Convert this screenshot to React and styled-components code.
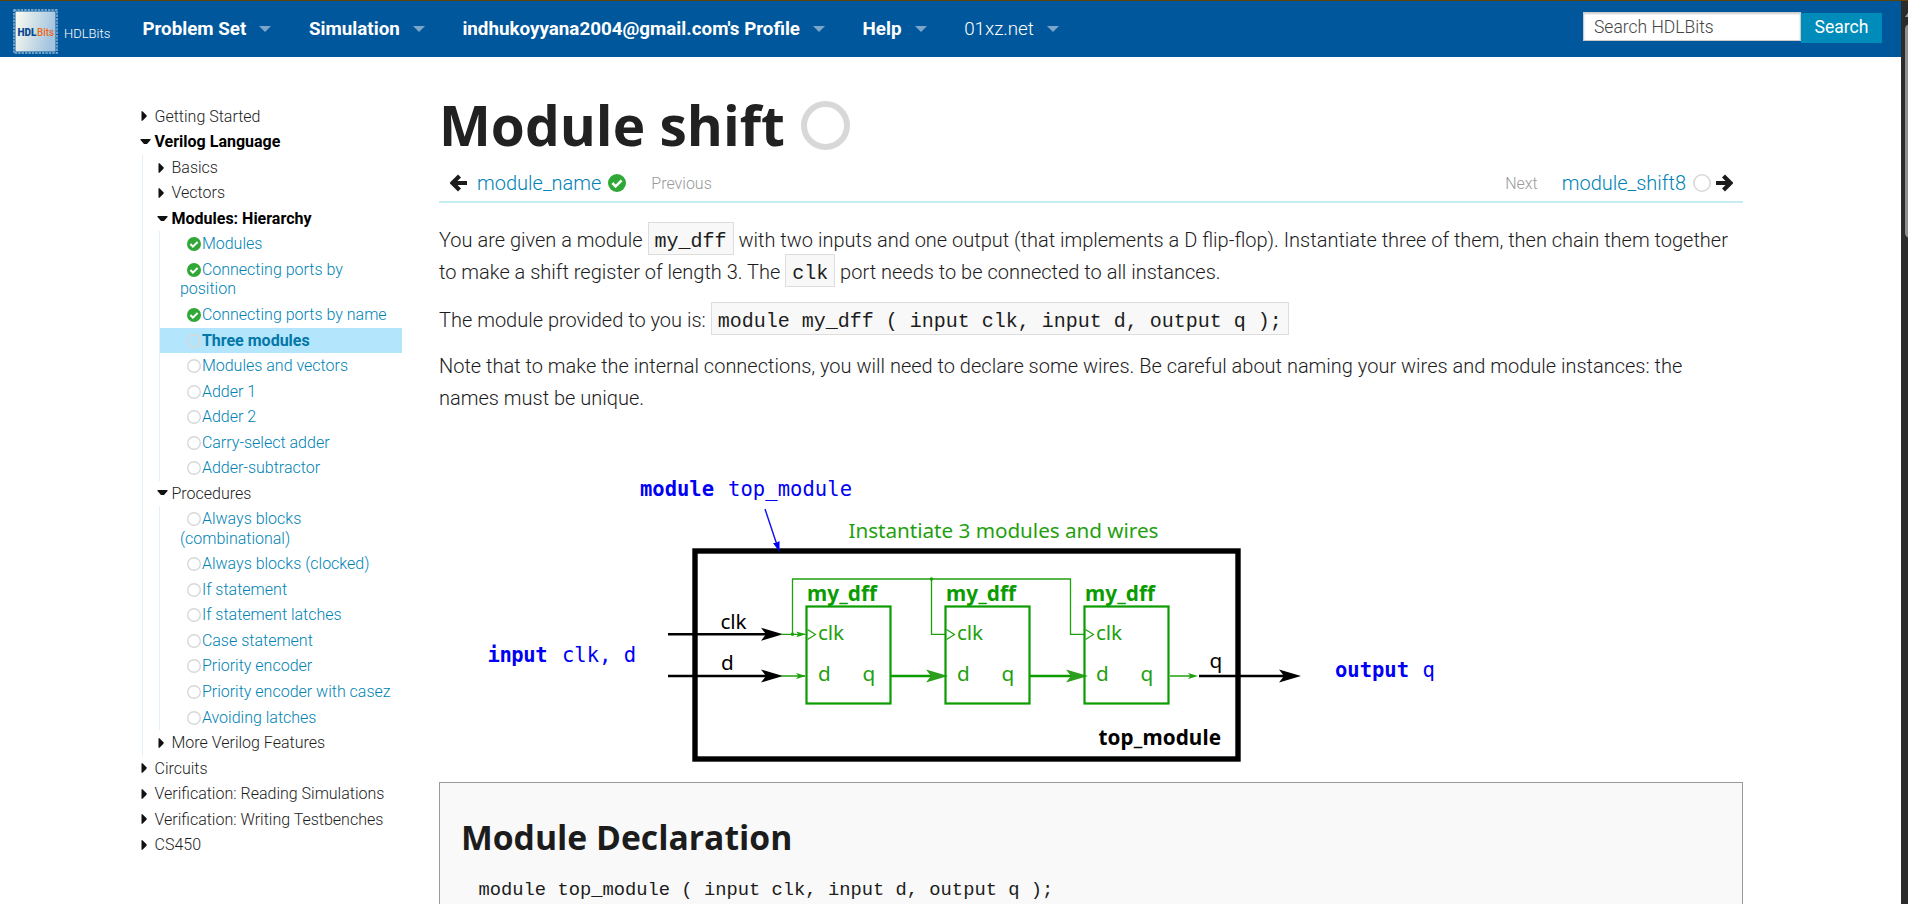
import React from "react";
import styled, { createGlobalStyle, css } from "styled-components";

const Global = createGlobalStyle`
  * { box-sizing: border-box; }
  body { margin: 0; background: #fff; overflow: hidden; font-family: Roboto, "Liberation Sans", sans-serif; font-weight: 300; color: #1c1c1c; }
  a { text-decoration: none; color: #0083b4; }
`;

const Screen = styled.div`
  display: flex;
  height: 904px;
  overflow: hidden;
  border-top: 1px solid #5f4208;
`;
const Page = styled.div`
  flex: 1;
  min-width: 0;
  display: flex;
  flex-direction: column;
`;
const ScrollTrack = styled.div`
  width: 7px;
  background: #2b2b2b;
  padding: 8px 0 0 4px;
  overflow: hidden;
  svg { display: block; margin-bottom: 7px; }
`;
const ScrollThumb = styled.div`
  width: 10px;
  height: 214px;
  border-radius: 5px;
  background: #8f8f8f;
`;

const NavBar = styled.nav`
  height: 56px;
  flex: none;
  background: #01579b;
  display: flex;
  align-items: flex-start;
  color: #fff;
  padding: 0 19px 0 13px;
`;
const Brand = styled.a`
  display: flex;
  align-items: flex-start;
  padding-top: 8px;
  width: 129.4px;
  color: #fff;
  font-size: 13px;
  svg { flex: none; }
  span { margin: 17px 0 0 6px; line-height: 16px; }
`;
const NavItem = styled.a`
  display: flex;
  align-items: center;
  height: 55px;
  color: #fff;
  font-size: 18.8px;
  font-weight: ${(p) => (p.$light ? 300 : 700)};
  margin-right: 37.6px;
  svg { margin-left: 13px; }
`;
const SearchForm = styled.div`
  margin-left: auto;
  padding-top: 11px;
  display: flex;
`;
const SearchInput = styled.input`
  width: 218px;
  height: 29px;
  border: 1px solid #ccc;
  box-shadow: inset 0 1px 2px rgba(0, 0, 0, 0.2);
  padding: 0 10px;
  font: 300 17.5px Roboto, sans-serif;
  background: #fff;
  &::placeholder { color: #444; opacity: 1; }
`;
const SearchButton = styled.button`
  margin-top: 1px;
  width: 81px;
  height: 30px;
  border: 0;
  padding: 0 0 3px;
  background: #008cba;
  color: #fff;
  font: 400 17.6px Roboto, sans-serif;
`;

const Body = styled.div`
  display: flex;
  flex: 1;
  min-height: 0;
  padding-left: 140px;
`;
const Sidebar = styled.aside`
  width: 262px;
  padding-top: 46.7px;
  margin-right: 37px;
  flex: none;
  font-size: 16px;
  line-height: 19.6px;
`;
const Heading = styled.div`
  display: flex;
  align-items: center;
  padding: 2.97px 0;
  color: ${(p) => (p.$bold ? "#000" : "#1c1c1c")};
  font-weight: ${(p) => (p.$bold ? 700 : 300)};
`;
const ArrowSlot = styled.span`
  width: 14.5px;
  display: flex;
`;
const Group = styled.div`
  margin-left: 2px;
  padding-left: ${(p) => (p.$leaf ? 0 : 14)}px;
  border-left: 1px solid #e1f1fb;
`;
const Leaf = styled.div`
  padding: 2.97px 0 2.97px 19.9px;
  ${(p) => p.$active && css`background: #b3e5fc; a { color: #0277a8; font-weight: 700; }`}
  svg { margin: 0 1px -2px 7px; }
`;

const Content = styled.main`
  width: 1304px;
  flex: none;
  padding-top: 30px;
`;
const Title = styled.h1`
  margin: 0;
  display: flex;
  align-items: center;
  font: 700 55px/76px "Open Sans", sans-serif;
  color: #212121;
  svg { margin: 1px 0 0 16px; }
`;
const Pager = styled.div`
  display: flex;
  align-items: center;
  height: 40px;
  padding: 1px 10px 0 11px;
  border-bottom: 2px solid #c5ebf3;
  font-size: 20px;
  svg { flex: none; }
`;
const PagerLink = styled.a`
  margin: 0 7px 0 ${(p) => p.$before}px;
`;
const Hint = styled.span`
  font-size: 16px;
  color: #999;
  padding-top: 2px;
  margin-left: ${(p) => (p.$end ? "auto" : "25px")};
`;
const ArrowGap = styled.span`
  width: 5px;
`;
const Prose = styled.div`
  font-size: 20px;
  line-height: 32px;
`;
const Para = styled.p`
  margin: ${(p) => p.$top}px 0 0;
`;
const Code = styled.code`
  font: 400 20px "Liberation Mono", monospace;
  color: #1c1c1c;
  background: #f8f8f8;
  border: 1px solid #ddd;
  padding: 7px 6px 1px;
`;
const Figure = styled.div`
  margin-top: 46px;
  height: 322px;
  padding-left: 32px;
  svg { display: block; }
`;
const Declaration = styled.section`
  border: 1px solid #999;
  background: #f9f9f9;
  height: 300px;
  padding: 27px 21px;
  h2 { margin: 0; font: 700 33.7px/54px "Open Sans", sans-serif; color: #1c1c1c; }
  pre { margin: 12px 0 0 17.5px; font: 400 18.8px/28px "Liberation Mono", monospace; color: #1c1c1c; }
`;

const NavCaret = () => (
  <svg width="12" height="8" viewBox="0 0 12 8"><path d="M0 1h12L6 7z" fill="#7aa6cb" /></svg>
);
const Ring = ({ size, w }) => (
  <svg width={size} height={size} viewBox={`0 0 ${size} ${size}`}>
    <circle cx={size / 2} cy={size / 2} r={(size - w) / 2} fill="none" stroke="#d8d8d8" strokeWidth={w} />
  </svg>
);
const Done = ({ size }) => (
  <svg width={size} height={size} viewBox="0 0 14 14">
    <circle cx="7" cy="7" r="7" fill="#2fa836" />
    <path d="M3.4 7l2.5 2.6L10.6 5" fill="none" stroke="#fff" strokeWidth="2" />
  </svg>
);
const Arrow = ({ flip }) => (
  <svg width="17" height="18" viewBox="0 0 17 18">
    <path
      d={flip ? "M7.500 2l7 7-7 7M14 9H0" : "M9.500 2l-7 7 7 7M3 9h14"}
      fill="none" stroke="#1c1c1c" strokeWidth="4.200"
    />
  </svg>
);
const TreeArrow = ({ open }) => (
  <ArrowSlot>
    {open ? (
      <svg width="11" height="8" viewBox="0 0 11 8"><path d="M0.5 1h10v1L7 6H4L0.500 2z" fill="#111" /></svg>
    ) : (
      <svg width="11" height="10" viewBox="0 0 11 10"><path d="M1.500 0.300h1L6.500 4.300v1.400L2.500 9.700h-1z" fill="#111" /></svg>
    )}
  </ArrowSlot>
);
const Node = ({ label, open, bold, children, leaf }) => (
  <>
    <Heading $bold={bold}><TreeArrow open={open} />{label}</Heading>
    {children && <Group $leaf={leaf}>{children}</Group>}
  </>
);
const Item = ({ done, active, children }) => (
  <Leaf $active={active}>{done ? <Done size={14} /> : <Ring size={14} w={1.4} />}<a>{children}</a></Leaf>
);

const Logo = () => (
  <svg width="45" height="45" viewBox="0 0 45 45">
    <defs>
      <linearGradient id="chip" x1="0" y1="0" x2="1" y2="0.25">
        <stop offset="0" stopColor="#fdfdf0" /><stop offset="1" stopColor="#a4c4e0" />
      </linearGradient>
    </defs>
    <rect x="1" y="1" width="43" height="43" fill="none" stroke="#8fb7d8" strokeWidth="1.500" strokeDasharray="2.400 1" />
    <rect x="2.500" y="2.500" width="40" height="40" fill="url(#chip)" />
    <text x="4.500" y="26.500" fontFamily="Roboto" fontSize="10.500" fontWeight="900" fill="#0b4a8f" textLength="19" lengthAdjust="spacingAndGlyphs">HDL</text>
    <text x="24" y="26.500" fontFamily="Roboto" fontSize="10.500" fontWeight="500" fill="#f0680f" textLength="17" lengthAdjust="spacingAndGlyphs">Bits</text>
  </svg>
);

const G = "#1fa00f";
const Dff = ({ x }) => (
  <g>
    <rect x={x} y="146.500" width="84" height="97" fill="none" stroke="#0a9c00" strokeWidth="2.200" />
    <path d={`M${x + 1} 169.500l8 5-8 5`} fill="none" stroke={G} strokeWidth="1.200" />
    <text x={x + 0.5} y="141" fontWeight="700" fill="#0a9c00" textLength="70">my_dff</text>
    <text x={x + 11.5} y="180" fill={G} textLength="26">clk</text>
    <text x={x + 11.5} y="221" fill={G}>d</text>
    <text x={x + 56} y="221" fill={G}>q</text>
  </g>
);
const Head = ({ x, y, fill, s = 1 }) => (
  <path d={`M${x} ${y}l${-22 * s} ${-6.5 * s}l${5 * s} ${6.5 * s}l${-5 * s} ${6.5 * s}z`} fill={fill} />
);
const Diagram = () => (
  <svg width="1000" height="302" viewBox="0 0 1000 302" fontFamily="Noto Sans" fontSize="20.700" fontWeight="400">
    <g fill="#0000f5" fontFamily="DejaVu Sans Mono" fontSize="20.500">
      <text x="169" y="36" fontWeight="700" textLength="74">module</text>
      <text x="257" y="36" textLength="124">top_module</text>
      <text x="16.500" y="202.300" fontWeight="700" textLength="60">input</text>
      <text x="91" y="202.300" textLength="74">clk, d</text>
      <text x="864" y="216.500" fontWeight="700" textLength="74">output</text>
      <text x="951.500" y="216.500">q</text>
    </g>
    <text x="377.500" y="77.500" fill={G} textLength="310">Instantiate 3 modules and wires</text>
    <rect x="224" y="91" width="543" height="208" fill="none" stroke="#000" strokeWidth="5.400" />
    <path d="M294 49L307 88" stroke="#1010f0" strokeWidth="1.400" />
    <path d="M308.500 92l-6.500-9 3 0 3.500-2z" fill="#0000f5" />
    <g stroke="#000" strokeWidth="2.500"><path d="M197 174.300H295M197 216H295M728 216H820" /></g>
    <Head x={312} y={174.3} fill="#000" /><Head x={312} y={216} fill="#000" /><Head x={830} y={216} fill="#000" />
    <g stroke={G} strokeWidth="1.300" fill="none">
      <path d="M310 174.300H334M310 216H334M321.500 174.300V119H599.500V174.300H614M460.500 119V174.300H475M699 216H720" />
    </g>
    <circle cx="321.500" cy="174.300" r="1.800" fill={G} /><circle cx="460.500" cy="119" r="1.800" fill={G} />
    <Head x={335} y={174.3} s={0.45} fill={G} /><Head x={335} y={216} s={0.45} fill={G} /><Head x={727} y={216} s={0.45} fill={G} />
    <path d="M420 216H460M559 216H600" stroke="#0a9c00" strokeWidth="2.300" />
    <Head x={477} y={216} fill="#2ca01c" /><Head x={617} y={216} fill="#2ca01c" />
    <Dff x={335.5} /><Dff x={474.5} /><Dff x={613.5} />
    <text x="738.500" y="208" fill="#000">q</text>
    <text x="249.500" y="168.500" fill="#000" textLength="26">clk</text>
    <text x="250" y="210" fill="#000">d</text>
    <text x="627.500" y="285.300" fill="#000" fontWeight="700" textLength="122.500">top_module</text>
  </svg>
);

export default function App() {
  return (
    <>
      <Global />
      <Screen>
        <Page>
          <NavBar>
            <Brand><Logo /><span>HDLBits</span></Brand>
            <NavItem>Problem Set<NavCaret /></NavItem>
            <NavItem>Simulation<NavCaret /></NavItem>
            <NavItem>indhukoyyana2004@gmail.com's Profile<NavCaret /></NavItem>
            <NavItem>Help<NavCaret /></NavItem>
            <NavItem $light>01xz.net<NavCaret /></NavItem>
            <SearchForm>
              <SearchInput placeholder="Search HDLBits" />
              <SearchButton>Search</SearchButton>
            </SearchForm>
          </NavBar>
          <Body>
            <Sidebar>
              <Node label="Getting Started" />
              <Node label="Verilog Language" open bold>
                <Node label="Basics" />
                <Node label="Vectors" />
                <Node label="Modules: Hierarchy" open bold leaf>
                  <Item done>Modules</Item>
                  <Item done>Connecting ports by<br />position</Item>
                  <Item done>Connecting ports by name</Item>
                  <Item active>Three modules</Item>
                  <Item>Modules and vectors</Item>
                  <Item>Adder 1</Item>
                  <Item>Adder 2</Item>
                  <Item>Carry-select adder</Item>
                  <Item>Adder-subtractor</Item>
                </Node>
                <Node label="Procedures" open leaf>
                  <Item>Always blocks<br />(combinational)</Item>
                  <Item>Always blocks (clocked)</Item>
                  <Item>If statement</Item>
                  <Item>If statement latches</Item>
                  <Item>Case statement</Item>
                  <Item>Priority encoder</Item>
                  <Item>Priority encoder with casez</Item>
                  <Item>Avoiding latches</Item>
                </Node>
                <Node label="More Verilog Features" />
              </Node>
              <Node label="Circuits" />
              <Node label="Verification: Reading Simulations" />
              <Node label="Verification: Writing Testbenches" />
              <Node label="CS450" />
            </Sidebar>
            <Content>
              <Title>Module shift<Ring size={49} w={6} /></Title>
              <Pager>
                <Arrow />
                <PagerLink $before={10}>module_name</PagerLink>
                <Done size={18} />
                <Hint>Previous</Hint>
                <Hint $end>Next</Hint>
                <PagerLink $before={24}>module_shift8</PagerLink>
                <Ring size={18} w={1.6} />
                <ArrowGap />
                <Arrow flip />
              </Pager>
              <Prose>
                <Para $top={21}>
                  You are given a module <Code>my_dff</Code> with two inputs and one output (that implements a D flip-flop). Instantiate three of them, then chain them together<br />to make a shift register of length 3. The <Code>clk</Code> port needs to be connected to all instances.
                </Para>
                <Para $top={16}>The module provided to you is: <Code>module my_dff ( input clk, input d, output q );</Code></Para>
                <Para $top={14}>
                  Note that to make the internal connections, you will need to declare some wires. Be careful about naming your wires and module instances: the<br />names must be unique.
                </Para>
              </Prose>
              <Figure><Diagram /></Figure>
              <Declaration>
                <h2>Module Declaration</h2>
                <pre>module top_module ( input clk, input d, output q );</pre>
              </Declaration>
            </Content>
          </Body>
        </Page>
        <ScrollTrack>
          <svg width="10" height="8" viewBox="0 0 10 8"><path d="M0 8L5 1l5 7z" fill="#9a9a9a" /></svg>
          <ScrollThumb />
        </ScrollTrack>
      </Screen>
    </>
  );
}
